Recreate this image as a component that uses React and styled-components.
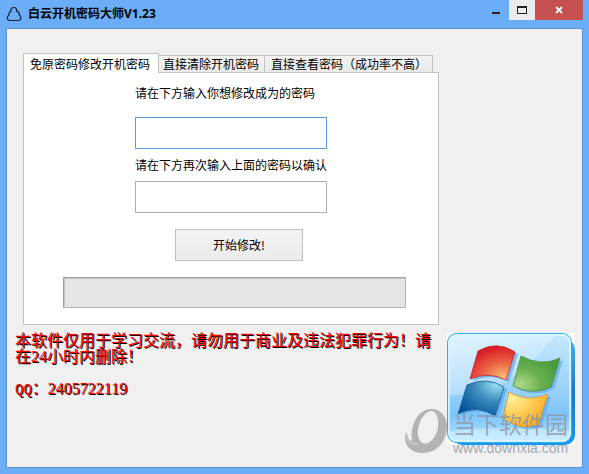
// BASIC
import React, { useState } from 'react'
import styled, { createGlobalStyle } from 'styled-components'

const GlobalStyle = createGlobalStyle`
	* {
		box-sizing: border-box;
	}

	body {
		margin: 0;
		background: #6badf6;
		color: #000;
		font-family: 'Noto Sans CJK SC', sans-serif;
		font-size: 12px;
		line-height: 16px;
	}

	button, input {
		font: inherit;
		color: inherit;
	}
`

const Window = styled.div`
	display: flex;
	flex-direction: column;
	min-height: 100vh;
	padding: 0 6px 6px;
`

const TitleBar = styled.header`
	display: flex;
	height: 28px;
`

const Title = styled.h1`
	display: flex;
	flex: 1;
	align-items: center;
	gap: 6px;
	margin: 0;
	font-family: 'Open Sans', 'Noto Sans CJK SC', sans-serif;
	font-size: 12px;
	font-weight: bold;
`

const WindowButton = styled.button`
	display: flex;
	justify-content: center;
	align-items: center;
	width: ${props => props.$wide ? '48px' : '26px'};
	height: 20px;
	padding: 0;
	border: 0;
	background: ${props => props.$background || 'transparent'};
`

const Client = styled.main`
	display: grid;
	flex: 1;
	grid-template-columns: 1fr 128px;
	grid-template-rows: auto 1fr;
	gap: 8px;
	padding: 24px 7px 16px 8px;
	border: 1px solid #5c93d6;
	background: #f0f0f0;
`

const TabArea = styled.section`
	grid-column: 1;
	margin-left: 8px;
`

const TabList = styled.div`
	display: flex;
	align-items: flex-end;
	height: 19px;
`

const Tab = styled.button`
	height: ${props => props.$active ? '20px' : '17px'};
	margin-bottom: ${props => props.$active ? '-1px' : '0'};
	padding: 0 ${props => props.$active ? '8px' : '5px'} 0 ${props => props.$active ? '6px' : '4px'};
	border: 1px solid #c3c3c3;
	border-bottom: 0;
	background: ${props => props.$active ? '#fff' : 'linear-gradient(#f3f3f3, #e9e9e9)'};
	white-space: nowrap;

	& + & {
		border-left: 0;
	}

	&:last-child {
		padding-left: 6px;
	}
`

const Panel = styled.div`
	padding: 12px 32px 16px;
	border: 1px solid #c3c3c3;
	background: #fff;
`

const Form = styled.form`
	display: flex;
	flex-direction: column;
	width: 192px;
	margin: 0 auto 16px;
`

const Label = styled.label`
	margin-bottom: ${props => props.$spaced ? '16px' : '8px'};
	white-space: nowrap;
`

const Input = styled.input`
	width: 100%;
	height: 32px;
	margin-bottom: ${props => props.$last ? '16px' : '8px'};
	padding: 4px 6px;
	border: 1px solid ${props => props.$active ? '#569de5' : '#abadb3'};
	border-radius: 0;
	background: #fff;
	outline: none;
`

const SubmitButton = styled.button`
	width: 128px;
	height: 32px;
	margin-left: 40px;
	padding: 0;
	border: 1px solid #c0c0c0;
	background: linear-gradient(#f3f3f3, #ebebeb);
`

const ProgressRow = styled.div`
	padding-left: 7px;
`

const Progress = styled.progress`
	display: block;
	width: 100%;
	height: 31px;
	appearance: none;
	border: 1px solid #b5b5b5;
	border-top-color: #a0a0a0;
	border-left-color: #a0a0a0;
	background: #e5e5e5;
	box-shadow: inset 1px 1px 0 #c4c4c4;

	&::-webkit-progress-bar {
		background: transparent;
	}

	&::-webkit-progress-value {
		background: #06b025;
	}
`

const Notice = styled.div`
	grid-column: 1;
	color: #f00;
	font-family: 'Liberation Serif', 'Noto Sans CJK SC', serif;
	font-size: 16px;
	line-height: 16px;
	text-shadow: 1px 1px 0 #000;
`

const NoticeLine = styled.p`
	margin: 0 0 16px;
`

const Mono = styled.span`
	font-family: 'Liberation Mono', monospace;
	font-size: 14px;
`

const LogoBox = styled.div`
	position: relative;
	height: 112px;
`

const Watermark = styled.div`
	position: absolute;
	top: 73px;
	left: -43px;
	display: flex;
	align-items: center;
	gap: 6px;
	color: rgba(140, 150, 162, 0.8);
	white-space: nowrap;
`

const WatermarkText = styled.div`
	display: flex;
	flex-direction: column;
`

const WatermarkName = styled.span`
	font-size: 23px;
	line-height: 34px;
`

const WatermarkUrl = styled.span`
	font-family: 'Liberation Sans', sans-serif;
	font-size: 14px;
	line-height: 16px;
`

const tabs = ['免原密码修改开机密码', '直接清除开机密码', '直接查看密码（成功率不高）']

const CloudIcon = () => (
	<svg width="16" height="16" viewBox="0 0 16 16" fill="none" stroke="#10223c" strokeWidth="1.2" aria-hidden="true">
		<path d="M5 5.2C4.6 2.4 6 1.5 7.8 1.5s3.2 1 2.7 3.7c2 .5 3 1.9 2.6 3.6 1.6.9 2 2.2 1.6 3.8-.3 1.4-1.2 1.9-2.5 1.9H4c-1.4 0-2.4-.6-2.6-1.9-.3-1.5.1-2.8 1.6-3.7-.4-1.6.2-3 2-3.7z" />
	</svg>
)

const WindowsLogo = () => (
	<svg width="128" height="112" viewBox="0 0 128 112" role="img" aria-label="Windows">
		<defs>
			<linearGradient id="edge" x1="0" y1="0" x2="0" y2="1">
				<stop offset="0" stopColor="#43b4ee" />
				<stop offset=".5" stopColor="#1677ce" />
				<stop offset="1" stopColor="#159af3" />
			</linearGradient>
			<linearGradient id="tile" x1="0" y1="0" x2="0" y2="1">
				<stop offset="0" stopColor="#c5e9fe" />
				<stop offset=".5" stopColor="#9cd3fc" />
				<stop offset=".75" stopColor="#7cc4fa" />
				<stop offset="1" stopColor="#b8e8ff" />
			</linearGradient>
			<linearGradient id="gloss" x1="0" y1="0" x2="1" y2="1">
				<stop offset="0" stopColor="#fff" stopOpacity=".5" />
				<stop offset="1" stopColor="#fff" stopOpacity=".05" />
			</linearGradient>
			<radialGradient id="red" cx=".75" cy=".95" r=".9">
				<stop offset="0" stopColor="#ffc277" />
				<stop offset=".5" stopColor="#ec6845" />
				<stop offset="1" stopColor="#dc1e28" />
			</radialGradient>
			<radialGradient id="green" cx=".15" cy=".8" r=".9">
				<stop offset="0" stopColor="#b0d888" />
				<stop offset=".5" stopColor="#69b14e" />
				<stop offset="1" stopColor="#489c3d" />
			</radialGradient>
			<radialGradient id="blue" cx=".85" cy=".1" r="1">
				<stop offset="0" stopColor="#95e0f3" />
				<stop offset=".5" stopColor="#3989bd" />
				<stop offset="1" stopColor="#07539a" />
			</radialGradient>
			<radialGradient id="yellow" cx=".2" cy=".2" r="1">
				<stop offset="0" stopColor="#fff09a" />
				<stop offset=".5" stopColor="#ffc94d" />
				<stop offset="1" stopColor="#f8a011" />
			</radialGradient>
		</defs>
		<rect width="128" height="112" fill="#fff" />
		<rect x="5" y="6" width="123" height="106" rx="10" fill="url(#edge)" />
		<rect x=".5" y=".5" width="124" height="109" rx="9" fill="url(#tile)" stroke="#2faee6" />
		<rect x="2" y="2" width="121" height="106" rx="8" fill="none" stroke="#e6f8ff" strokeWidth="1.5" />
		<path d="M3 10q0-7 7-7h98C88 24 72 57 3 63z" fill="url(#gloss)" />
		<path d="M3 98q60-6 119 0v3q0 6-7 6H10q-7 0-7-6z" fill="#dff6ff" opacity=".5" />
		<g fill="#5eaaf0" opacity=".7" transform="translate(3 2)">
			<path d="M31 18Q50 7 68 19L59 47Q42 38 23 46z" />
			<path d="M74 23Q94 34 113 25L104 54Q85 63 66 53z" />
			<path d="M20 52Q40 43 57 54L48 83Q31 71 11 81z" />
			<path d="M62 59Q81 70 101 61L91 92Q73 98 56 85z" />
		</g>
		<path d="M31 18Q50 7 68 19L59 47Q42 38 23 46z" fill="url(#red)" stroke="#bd2a28" strokeWidth=".8" />
		<path d="M74 23Q94 34 113 25L104 54Q85 63 66 53z" fill="url(#green)" stroke="#478f3a" strokeWidth=".8" />
		<path d="M20 52Q40 43 57 54L48 83Q31 71 11 81z" fill="url(#blue)" stroke="#155c94" strokeWidth=".8" />
		<path d="M62 59Q81 70 101 61L91 92Q73 98 56 85z" fill="url(#yellow)" stroke="#dc9820" strokeWidth=".8" />
	</svg>
)

const RingIcon = () => (
	<svg width="43" height="46" viewBox="0 0 43 46" fill="#b3b3b3" aria-hidden="true">
		<path fillRule="evenodd" d="M26 1C36 0 43 8 43 18C43 33 33 45 19 45C9 45 1 39 1 30Q1 27 3 24C3 30 5 32 8 33C6 17 13 3 26 1zM27 3C19 4 13 17 14 27C15 34 19 37 24 35C31 32 35 22 34 13C33 6 31 3 27 3z" />
		<path d="M2 30Q5 36 14 36" fill="none" stroke="#dcdcdc" />
	</svg>
)

function App() {
	const [active, setActive] = useState(0)

	return (
		<>
			<GlobalStyle />
			<Window>
				<TitleBar>
					<Title><CloudIcon />白云开机密码大师V1.23</Title>
					<WindowButton aria-label="最小化">
						<svg width="8" height="10" aria-hidden="true"><path d="M0 7h8v2H0z" fill="#222" /></svg>
					</WindowButton>
					<WindowButton aria-label="最大化" $background="#ececec">
						<svg width="10" height="8" aria-hidden="true"><path d="M0 0h10v8H0zM1 2v5h8V2z" fill="#222" fillRule="evenodd" /></svg>
					</WindowButton>
					<WindowButton aria-label="关闭" $wide $background="#c75050">
						<svg width="8" height="8" viewBox="0 0 8 8" aria-hidden="true"><path d="M1 1l6 6M7 1L1 7" stroke="#fff" strokeWidth="1.8" /></svg>
					</WindowButton>
				</TitleBar>
				<Client>
					<TabArea>
						<TabList role="tablist">
							{tabs.map((name, i) => (
								<Tab key={name} role="tab" aria-selected={i === active} $active={i === active} onClick={() => setActive(i)}>{name}</Tab>
							))}
						</TabList>
						<Panel role="tabpanel">
							<Form onSubmit={e => e.preventDefault()}>
								<Label htmlFor="password" $spaced>请在下方输入你想修改成为的密码</Label>
								<Input id="password" type="password" autoComplete="off" $active />
								<Label htmlFor="confirm">请在下方再次输入上面的密码以确认</Label>
								<Input id="confirm" type="password" autoComplete="off" $last />
								<SubmitButton type="submit">开始修改!</SubmitButton>
							</Form>
							<ProgressRow>
								<Progress value="0" max="100" aria-label="进度" />
							</ProgressRow>
						</Panel>
					</TabArea>
					<Notice>
						<NoticeLine>本软件仅用于学习交流，请勿用于商业及违法犯罪行为！请在24小时内删除！</NoticeLine>
						<NoticeLine><Mono>QQ</Mono>：2405722119</NoticeLine>
					</Notice>
					<LogoBox>
						<WindowsLogo />
						<Watermark>
							<RingIcon />
							<WatermarkText>
								<WatermarkName>当下软件园</WatermarkName>
								<WatermarkUrl>www.downxia.com</WatermarkUrl>
							</WatermarkText>
						</Watermark>
					</LogoBox>
				</Client>
			</Window>
		</>
	)
}

export default App
